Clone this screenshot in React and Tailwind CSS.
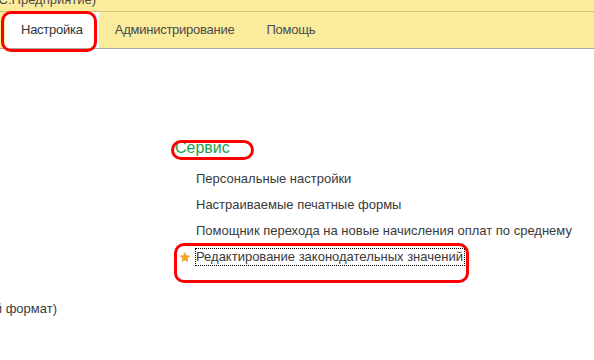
const tabs = ['Настройка', 'Администрирование', 'Помощь'];

const items = [
  'Персональные настройки',
  'Настраиваемые печатные формы',
  'Помощник перехода на новые начисления оплат по среднему',
];

function Star() {
  return (
    <svg width="12" height="12" viewBox="0 0 24 24" className="absolute left-[-17px] top-[7px]">
      <path
        d="M12 1.5l3.1 7.2 7.8.7-5.9 5.2 1.8 7.7L12 18.3l-6.8 4 1.8-7.7L1.1 9.4l7.8-.7z"
        fill="#f5a524"
      />
    </svg>
  );
}

// red annotation frame drawn over the screenshot
function Ring({ className }) {
  return <div className={`absolute border-[3px] border-[#ff0000] rounded-[10px] ${className}`} />;
}

export default function App() {
  return (
    <div
      className="relative w-[594px] h-[360px] overflow-hidden bg-white text-[#333]"
      style={{ fontFamily: '"Liberation Sans", Arial, sans-serif' }}
    >
      <div className="h-[12px] bg-[#fbec9d] overflow-hidden border-b border-[#d4c276]">
        <div className="-mt-[8px] -ml-[13px] text-[13px] leading-[15px] whitespace-nowrap text-[#4a4a4a]">
          (1С:Предприятие)
        </div>
      </div>
      <div className="flex h-[37px] bg-[#fbec9d] border-b border-[#a8a8a8] pl-[5px]">
        {tabs.map((t, i) => (
          <div
            key={t}
            className={`px-4 h-full flex items-center text-[13px] tracking-[-0.25px] ${i === 0 ? 'bg-white text-[#333]' : 'text-[#4a4a4a]'}`}
          >
            {t}
          </div>
        ))}
      </div>

      <div className="pl-[175px] pt-[89px]">
        <div className="text-[16px] leading-[20px] text-[#1e9e4c]">Сервис</div>
        <div className="mt-[8px] pl-[21px] text-[13px] text-[#3a3a3a]">
          {items.map((t) => (
            <div key={t} className="h-[26px] leading-[26px] whitespace-nowrap">
              {t}
            </div>
          ))}
          <div className="relative h-[26px] flex items-center">
            <Star />
            <span className="-ml-[1px] border border-dotted border-black leading-[16px] whitespace-nowrap pr-[1px]">
              Редактирование законодательных значений
            </span>
          </div>
        </div>
      </div>

      <div className="mt-[31px] w-[57px] overflow-hidden flex justify-end">
        <div className="text-[13px] leading-[16px] whitespace-nowrap text-[#3a3a3a]">
          Печать документов (новый формат)
        </div>
      </div>

      <Ring className="left-[1px] top-[11px] w-[96px] h-[41px]" />
      <Ring className="left-[171px] top-[140px] w-[83px] h-[20px]" />
      <Ring className="left-[174px] top-[243px] w-[295px] h-[40px]" />
    </div>
  );
}
